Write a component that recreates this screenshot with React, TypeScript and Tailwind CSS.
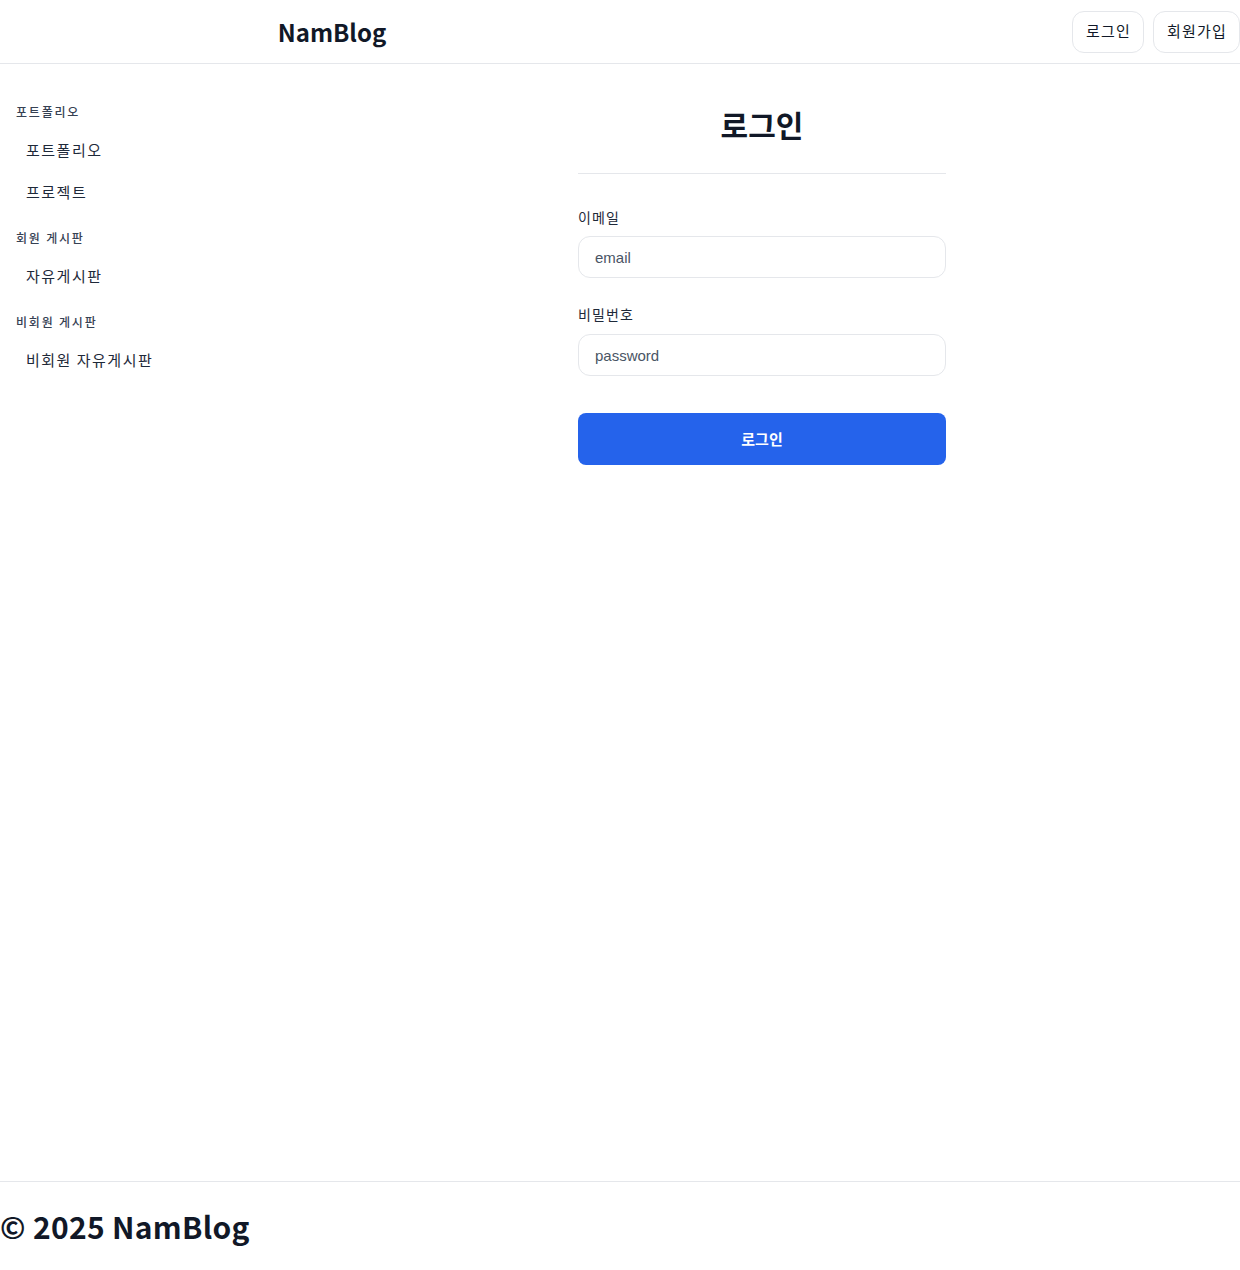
import React from "react";

const font = { fontFamily: '"Noto Sans CJK KR", "Noto Sans", sans-serif' };
const latin = { fontFamily: '"Liberation Sans", Arial, sans-serif' };

const menu = [
  { title: "포트폴리오", items: ["포트폴리오", "프로젝트"] },
  { title: "회원 게시판", items: ["자유게시판"] },
  { title: "비회원 게시판", items: ["비회원 자유게시판"] },
];

const App = () => {
  return (
    <div className="min-h-[1270px] flex flex-col bg-white text-gray-900" style={font}>
      <header className="h-16 flex items-center border-b border-gray-200">
        <div className="w-[664px] flex justify-center">
          <span className="text-2xl font-bold text-[#111827]">NamBlog</span>
        </div>
        <div className="flex-1" />
        <div className="flex gap-[9px]">
          <button className="h-[42px] pl-[13px] pr-[12px] rounded-xl border border-gray-200 text-[15px] tracking-[0.08em]">
            로그인
          </button>
          <button className="h-[42px] pl-[13px] pr-[12px] rounded-xl border border-gray-200 text-[15px] tracking-[0.08em]">
            회원가입
          </button>
        </div>
      </header>

      <div className="flex flex-1">
        <aside className="w-[284px] pl-4 pt-[40px] flex flex-col gap-[27px]">
          {menu.map((g) => (
            <div key={g.title}>
              <div className="text-xs leading-4 tracking-[0.15em] text-gray-700 font-medium">
                {g.title}
              </div>
              <ul className="mt-[19px] flex flex-col gap-[20px]">
                {g.items.map((i) => (
                  <li
                    key={i}
                    className="pl-[10px] text-[15px] leading-[22px] tracking-[0.1em] text-gray-800"
                  >
                    {i}
                  </li>
                ))}
              </ul>
            </div>
          ))}
        </aside>

        <main className="flex-1 flex justify-center pt-[42px]">
          <div className="w-[368px]">
            <h1 className="text-3xl font-bold text-center text-[#111827]">로그인</h1>
            <div className="mt-[31px] border-t border-gray-200" />
            <label className="block mt-[33px] text-sm tracking-[0.08em] text-gray-800">이메일</label>
            <input
              className="mt-[9px] w-full h-[42px] rounded-xl border border-gray-200 px-4 text-[15px] placeholder:text-gray-600 outline-none"
              style={latin}
              placeholder="email"
            />
            <label className="block mt-[26px] text-sm tracking-[0.08em] text-gray-800">비밀번호</label>
            <input
              type="password"
              className="mt-[10px] w-full h-[42px] rounded-xl border border-gray-200 px-4 text-[15px] placeholder:text-gray-600 outline-none"
              style={latin}
              placeholder="password"
            />
            <button className="mt-[37px] w-full h-[52px] rounded-lg bg-[#2563eb] text-white text-[15px] font-bold">
              로그인
            </button>
          </div>
        </main>
      </div>

      <footer className="border-t border-gray-200 h-[89px] flex items-center">
        <span className="text-3xl font-bold tracking-[0.01em] text-[#111827]">© 2025 NamBlog</span>
      </footer>
    </div>
  );
};

export default App;
